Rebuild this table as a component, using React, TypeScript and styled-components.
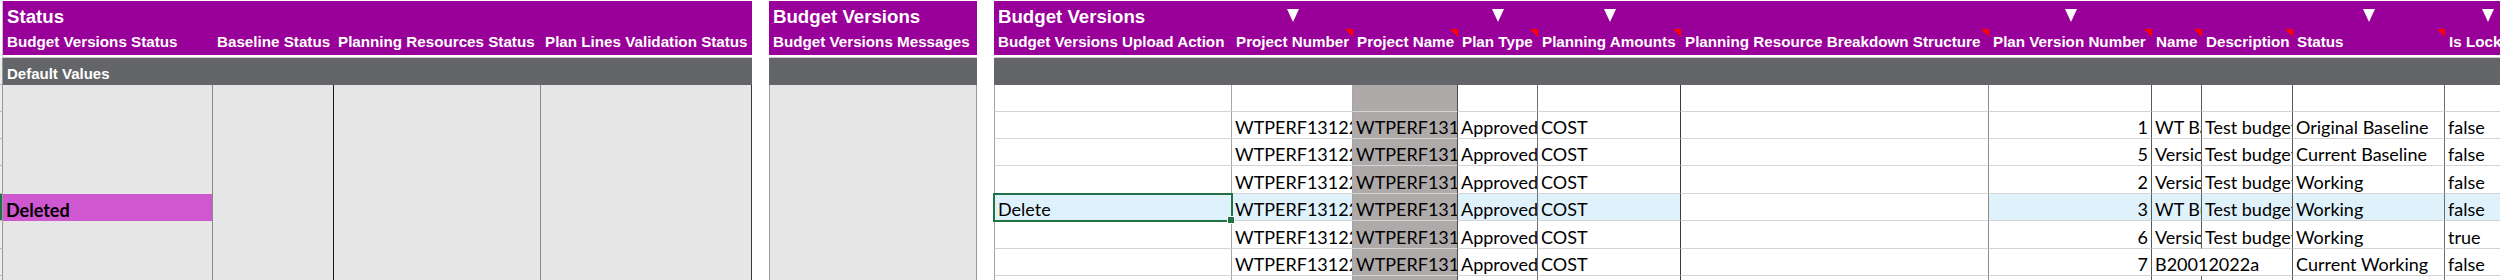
import React from "react";
import styled, { createGlobalStyle } from "styled-components";

const GlobalStyle = createGlobalStyle`
  html, body {
    margin: 0;
    padding: 0;
    background: #ffffff;
  }
  body {
    width: 2500px;
    height: 280px;
    overflow: hidden;
  }
`;

const PURPLE = "#990099";
const BAND = "#636569";
const GRID = "#d4d4d4";
const PANEL = "#e6e6e6";
const HILITE = "#dff2fc";
const EXCEL_GREEN = "#217346";

// data row heights (px), first row sits right under the grey "Default Values" band
const ROWS = [27, 27, 27, 28, 27, 28, 27, 27];
const SELECTED = 4;

type Col = {
  w: number;
  label: string;
  line: string;
  arrow?: boolean;
  note?: boolean;
  fill?: string;
  right?: boolean;
  noHilite?: boolean;
};

type GroupDef = {
  title: string;
  fill: string;
  gridRows: boolean;
  edge?: string;
  band?: string;
  cols: Col[];
  rows: string[][];
};

const Sheet = styled.div`
  display: flex;
  align-items: flex-start;
  padding-top: 1px;
  width: 2500px;
  height: 280px;
  overflow: hidden;
`;

const RowStrip = styled.div`
  flex: none;
  width: 3px;
  display: flex;
  flex-direction: column;
`;

const StripHead = styled.div`
  height: 57px;
  box-sizing: border-box;
  border-right: 1px solid #c8c8c8;
`;

const StripCell = styled.div<{ $h: number; $active?: boolean }>`
  height: ${(p) => p.$h}px;
  box-sizing: border-box;
  background: ${(p) => (p.$active ? EXCEL_GREEN : "#ececec")};
  border-right: 1px solid #9a9a9a;
  border-bottom: 1px solid #b8b8b8;
`;

const Groups = styled.div`
  display: flex;
  gap: 17px;
`;

const GroupGrid = styled.div<{ $cols: string; $fill: string }>`
  flex: none;
  display: grid;
  grid-template-columns: ${(p) => p.$cols};
  grid-template-rows: 28px 26px 3px 27px ${ROWS.map((r) => `${r}px`).join(" ")};
  background: ${(p) => p.$fill};
`;

const TitleCell = styled.div`
  position: relative;
  display: flex;
  align-items: flex-end;
  padding: 0 4px 3px 4px;
  background: ${PURPLE};
  color: #ffffff;
  font-family: "Liberation Sans", Arial, sans-serif;
  font-weight: 700;
  font-size: 18.67px;
  line-height: 19px;
  white-space: nowrap;
  overflow: hidden;
`;

const FilterArrow = styled.span`
  width: 0;
  height: 0;
  margin: 0 auto 4px auto;
  border-left: 6px solid transparent;
  border-right: 6px solid transparent;
  border-top: 13px solid #ffffff;
`;

const SubCell = styled.div`
  position: relative;
  display: flex;
  align-items: flex-end;
  padding: 0 3px 6px 4px;
  background: ${PURPLE};
  color: #ffffff;
  font-family: "Liberation Sans", Arial, sans-serif;
  font-weight: 700;
  font-size: 15.2px;
  line-height: 15px;
  white-space: nowrap;
  overflow: hidden;
`;

const NoteMark = styled.span`
  position: absolute;
  top: 0;
  right: 0;
  width: 0;
  height: 0;
  border-top: 8px solid #ff0000;
  border-left: 8px solid transparent;
`;

const Spacer = styled.div`
  grid-column: 1 / -1;
  background: #ffffff;
  border-bottom: 1px solid #c8c8c8;
`;

const Band = styled.div`
  grid-column: 1 / -1;
  display: flex;
  align-items: center;
  padding: 3px 0 0 4px;
  background: ${BAND};
  color: #ffffff;
  font-family: "Liberation Sans", Arial, sans-serif;
  font-weight: 700;
  font-size: 15px;
  white-space: nowrap;
`;

const DataCell = styled.div<{
  $line: string;
  $edge?: string;
  $grid: boolean;
  $bg?: string;
  $right?: boolean;
  $bold?: boolean;
  $spill?: boolean;
}>`
  box-sizing: border-box;
  min-width: 0;
  display: flex;
  align-items: flex-end;
  justify-content: ${(p) => (p.$right ? "flex-end" : "flex-start")};
  padding: 0 3px 0 3px;
  border-left: ${(p) => (p.$edge ? `1px solid ${p.$edge}` : "none")};
  border-right: 1px solid ${(p) => (p.$spill ? "transparent" : p.$line)};
  border-bottom: ${(p) => (p.$grid ? `1px solid ${GRID}` : "none")};
  background: ${(p) => p.$bg ?? "transparent"};
  color: #000000;
  font-family: Lato, "Noto Sans", sans-serif;
  font-size: 18px;
  font-weight: ${(p) => (p.$bold ? 700 : 400)};
  line-height: 22px;
  white-space: nowrap;
  overflow: ${(p) => (p.$spill ? "visible" : "hidden")};
`;

const SelectedCell = styled(DataCell)`
  position: relative;
  z-index: 1;
  overflow: visible;
  outline: 2px solid ${EXCEL_GREEN};
  outline-offset: -1px;

  &::after {
    content: "";
    position: absolute;
    right: -4px;
    bottom: -4px;
    width: 6px;
    height: 6px;
    background: ${EXCEL_GREEN};
    border: 1px solid #ffffff;
  }
`;

const empty = (n: number) => Array.from({ length: n }, () => "");

const PN = "WTPERF1312202201";
const DESC = "Test budget version";

const statusRows = ROWS.map((_, i) => (i === SELECTED ? ["Deleted", "", "", ""] : empty(4)));

const versionRows: string[][] = [
  empty(11),
  ["", PN, PN, "Approved Budget", "COST", "", "1", "WT Baseline 1", DESC, "Original Baseline", "false"],
  ["", PN, PN, "Approved Budget", "COST", "", "5", "Version 5", DESC, "Current Baseline", "false"],
  ["", PN, PN, "Approved Budget", "COST", "", "2", "Version 2", DESC, "Working", "false"],
  ["Delete", PN, PN, "Approved Budget", "COST", "", "3", "WT Budget 3", DESC, "Working", "false"],
  ["", PN, PN, "Approved Budget", "COST", "", "6", "Version 6", DESC, "Working", "true"],
  ["", PN, PN, "Approved Budget", "COST", "", "7", "B20012022a", "", "Current Working", "false"],
  empty(11),
];

const groups: GroupDef[] = [
  {
    title: "Status",
    fill: PANEL,
    gridRows: false,
    band: "Default Values",
    cols: [
      { w: 210, label: "Budget Versions Status", line: "#8a8a8a" },
      { w: 121, label: "Baseline Status", line: "#1a1a1a" },
      { w: 207, label: "Planning Resources Status", line: "#8a8a8a" },
      { w: 211, label: "Plan Lines Validation Status", line: "#3a3a3a" },
    ],
    rows: statusRows,
  },
  {
    title: "Budget Versions",
    fill: PANEL,
    gridRows: false,
    edge: "#9a9a9a",
    cols: [{ w: 208, label: "Budget Versions Messages", line: "#9a9a9a" }],
    rows: ROWS.map(() => [""]),
  },
  {
    title: "Budget Versions",
    fill: "#ffffff",
    gridRows: true,
    edge: "#a6a6a6",
    cols: [
      { w: 238, label: "Budget Versions Upload Action", line: "#a6a6a6" },
      { w: 121, label: "Project Number", line: "#a6a6a6", arrow: true, note: true },
      { w: 105, label: "Project Name", line: "#4a4a4a", note: true, fill: "#aeaaaa", noHilite: true },
      { w: 80, label: "Plan Type", line: "#6e6e6e", arrow: true, note: true },
      { w: 143, label: "Planning Amounts", line: "#3a3a3a", arrow: true, note: true },
      { w: 308, label: "Planning Resource Breakdown Structure", line: "#8c8c8c", note: true, noHilite: true },
      { w: 163, label: "Plan Version Number", line: "#5a5a5a", arrow: true, note: true, right: true },
      { w: 50, label: "Name", line: "#5a5a5a", note: true },
      { w: 91, label: "Description", line: "#5a5a5a", note: true },
      { w: 152, label: "Status", line: "#6e6e6e", arrow: true, note: true },
      { w: 85, label: "Is Locked", line: "#d4d4d4", arrow: true },
    ],
    rows: versionRows,
  },
];

function cellFill(g: GroupDef, c: Col, row: number, col: number, text: string) {
  if (g.title === "Status" && col === 0 && text === "Deleted") return "#cf57cf";
  if (c.fill) return c.fill;
  if (g.gridRows && row === SELECTED && !c.noHilite) return HILITE;
  return undefined;
}

function SheetGroup({ g }: { g: GroupDef }) {
  const template = g.cols.map((c) => `${c.w}px`).join(" ");
  return (
    <GroupGrid $cols={template} $fill={g.fill}>
      {g.cols.map((c, i) => (
        <TitleCell key={`t${i}`}>
          {i === 0 ? g.title : c.arrow ? <FilterArrow /> : null}
        </TitleCell>
      ))}
      {g.cols.map((c, i) => (
        <SubCell key={`s${i}`}>
          {c.label}
          {c.note && <NoteMark />}
        </SubCell>
      ))}
      <Spacer />
      <Band>{g.band}</Band>
      {g.rows.map((cells, r) =>
        cells.map((text, i) => {
          const c = g.cols[i];
          const next = cells[i + 1];
          const spill = !!text && next === "" && !c.right && text.length * 9 > c.w;
          const props = {
            $line: c.line,
            $edge: i === 0 ? g.edge : undefined,
            $grid: g.gridRows,
            $bg: cellFill(g, c, r, i, text),
            $right: c.right,
            $bold: text === "Deleted",
            $spill: spill,
          };
          if (g.gridRows && r === SELECTED && i === 0) {
            return (
              <SelectedCell key={`${r}-${i}`} {...props} $bg={HILITE}>
                {text}
              </SelectedCell>
            );
          }
          return (
            <DataCell key={`${r}-${i}`} {...props}>
              {text}
            </DataCell>
          );
        })
      )}
    </GroupGrid>
  );
}

export default function App() {
  return (
    <>
      <GlobalStyle />
      <Sheet>
        <RowStrip>
          <StripHead />
          <StripCell $h={27} />
          {ROWS.map((h, i) => (
            <StripCell key={i} $h={h} $active={i === SELECTED} />
          ))}
        </RowStrip>
        <Groups>
          {groups.map((g, i) => (
            <SheetGroup key={i} g={g} />
          ))}
        </Groups>
      </Sheet>
    </>
  );
}
